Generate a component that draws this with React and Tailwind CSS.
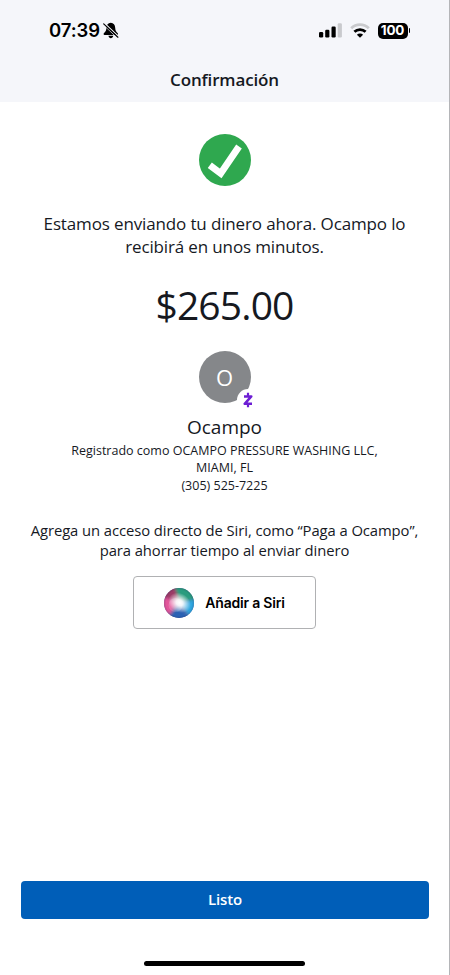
function StatusBar() {
  return (
    <div className="flex h-[61px] items-center justify-between pl-[49px] pr-[39px]">
      <div className="flex items-center gap-[3px] font-['Inter',sans-serif] text-[18.5px] font-semibold leading-none tracking-[-0.1px] text-black">
        <span className="whitespace-nowrap">07:39</span>
        <svg viewBox="0 0 16 17" className="h-[17px] w-[16px]">
          <path
            d="M7.8.8C5 1 3.500 3 3.400 5.800c-.1 2.800-.8 3.900-2.500 5.400-.7.700-.3 1.700.6 1.700h12.600c.9 0 1.300-1 .6-1.700-1.700-1.500-2.400-2.600-2.500-5.400C12.100 3 10.600 1 7.800.8Z"
            fill="#000"
          />
          <path d="M5.400 13.700h4.900c-.3 1.600-1.300 2.500-2.450 2.500s-2.150-.9-2.450-2.500Z" fill="#000" />
          <path d="M1.500 1.300 15.400 14.400" stroke="#f5f6fa" strokeWidth="1.300" />
          <path d="M.2 2.700 14.100 15.800" stroke="#f5f6fa" strokeWidth="0.800" />
          <path d="M.7 1.900 14.900 15.200" stroke="#000" strokeWidth="1.200" strokeLinecap="round" />
        </svg>
      </div>

      <div className="flex items-center gap-[8px]">
        <svg viewBox="0 0 23 15" className="h-[15px] w-[23px]">
          <rect x="0" y="9" width="4.2" height="5.5" rx="1.2" fill="#000" />
          <rect x="6.2" y="6.7" width="4.2" height="7.8" rx="1.2" fill="#000" />
          <rect x="12.5" y="3.5" width="4.2" height="11" rx="1.2" fill="#000" />
          <rect x="18.7" y="0.2" width="4.2" height="14.3" rx="1.2" fill="#c9cacd" />
        </svg>
        <svg viewBox="0 0 20 15" className="h-[15px] w-[20px]" fill="none">
          <path d="M1.200 5.200a12.700 12.700 0 0 1 17.600 0" stroke="#c9cacd" strokeWidth="2.800" />
          <path d="M4.400 8.800a8.100 8.100 0 0 1 11.200 0" stroke="#000" strokeWidth="2.800" />
          <path d="m10 14.800-3.100-3a4.400 4.400 0 0 1 6.200 0Z" fill="#000" />
        </svg>
        <div className="flex items-center gap-[1px]">
          <div className="flex h-[16px] w-[30px] items-center justify-center rounded-[5px] bg-black font-['Inter',sans-serif] text-[13.5px] font-bold leading-none tracking-[-0.2px] text-white">
            100
          </div>
          <div className="h-[5px] w-[1.5px] rounded-r-full bg-black" />
        </div>
      </div>
    </div>
  );
}

function CheckIcon() {
  return (
    <svg viewBox="0 0 52 52" className="h-[52px] w-[52px]">
      <circle cx="26" cy="26" r="26" fill="#2fa84f" />
      <path
        d="M10.800 31.300 21.700 39.500 40 12.500"
        fill="none"
        stroke="#fff"
        strokeWidth="6.800"
        strokeLinejoin="miter"
      />
    </svg>
  );
}

function Avatar() {
  return (
    <div className="relative flex h-[52px] w-[52px] items-center justify-center rounded-full bg-[#85878a] text-[22px] leading-none text-white">
      O
      <span className="absolute left-[38px] top-[38px] flex h-[22px] w-[22px] items-center justify-center rounded-full bg-white">
        <svg viewBox="0 0 10 16" className="h-[16px] w-[10px]" fill="none" stroke="#6d1ed4">
          <path d="M1 4.400h7.300L1.700 11.800H9" strokeWidth="2.500" strokeLinejoin="round" />
          <path d="M5 .8V4M5 12v3.200" strokeWidth="2.200" />
        </svg>
      </span>
    </div>
  );
}

function SiriOrb() {
  return (
    <svg viewBox="0 0 30 30" className="h-[30px] w-[30px]">
      <defs>
        <clipPath id="orb">
          <circle cx="15" cy="15" r="15" />
        </clipPath>
        <filter id="soft" x="-50%" y="-50%" width="200%" height="200%">
          <feGaussianBlur stdDeviation="1.8" />
        </filter>
        <radialGradient id="glow">
          <stop offset="0" stopColor="#fff" />
          <stop offset="0.3" stopColor="#fff" stopOpacity="0.9" />
          <stop offset="1" stopColor="#fff" stopOpacity="0" />
        </radialGradient>
        <radialGradient id="rim">
          <stop offset="0.85" stopColor="#1c2450" stopOpacity="0" />
          <stop offset="1" stopColor="#1c2450" stopOpacity="0.2" />
        </radialGradient>
      </defs>
      <g clipPath="url(#orb)">
        <rect width="30" height="30" fill="#6a6fa6" />
        <g filter="url(#soft)">
          <path d="M-3-3h16l2 17L-3 9Z" fill="#9c3b66" />
          <path d="M10-3h23v14l-17 3Z" fill="#2a9c7e" />
          <path d="M-3 8l17 6-8 12-9 4Z" fill="#e2559a" />
          <path d="M33 11 16 15l10 14 7-3Z" fill="#2fa6e0" />
          <path d="M15 17 2 33h26Z" fill="#2a62b4" />
        </g>
        <circle cx="11.5" cy="17" r="7" fill="#fff" opacity="0.18" />
        <ellipse cx="15.5" cy="15" rx="12" ry="9.5" fill="url(#glow)" transform="rotate(30 16 15)" />
        <circle cx="15" cy="15" r="15" fill="url(#rim)" />
      </g>
    </svg>
  );
}

function App() {
  return (
    <div className="flex h-[975px] w-[450px] flex-col border-r border-[#b4b5b8] bg-white font-['Open_Sans',sans-serif] text-[#16191f]">
      <header className="h-[102px] bg-[#f5f6fa]">
        <StatusBar />
        <h1 className="text-center text-[17px] font-semibold leading-[38px] tracking-[-0.15px]">
          Confirmación
        </h1>
      </header>

      <main className="flex flex-1 flex-col items-center pt-[32px] text-center">
        <CheckIcon />

        <p className="mt-[26px] whitespace-nowrap text-[17px] leading-[23px] tracking-[-0.14px]">
          Estamos enviando tu dinero ahora. Ocampo lo
          <br />
          recibirá en unos minutos.
        </p>

        <p className="mt-[22px] text-[39px] leading-[50px] tracking-[-0.85px]">$265.00</p>

        <div className="mt-[21px]">
          <Avatar />
        </div>

        <h2 className="mt-[10px] text-[19px] leading-[28px]">Ocampo</h2>
        <p className="mt-[0.6px] whitespace-nowrap text-[12.5px] leading-[17.6px]">
          Registrado como OCAMPO PRESSURE WASHING LLC,
          <br />
          MIAMI, FL
          <br />
          (305) 525-7225
        </p>

        <p className="mt-[25.4px] whitespace-nowrap text-[14.8px] leading-[20px] tracking-[-0.07px]">
          Agrega un acceso directo de Siri, como “Paga a Ocampo”,
          <br />
          para ahorrar tiempo al enviar dinero
        </p>

        <button className="mt-[16.4px] flex h-[53px] w-[183px] items-center justify-center gap-[11px] rounded-[4px] border border-[#b0b1b3] bg-white">
          <SiriOrb />
          <span className="whitespace-nowrap font-['Inter',sans-serif] text-[14px] font-semibold tracking-[-0.2px] text-black">
            Añadir a Siri
          </span>
        </button>
      </main>

      <footer className="flex flex-col items-center pb-[9px] pl-[21px] pr-[20px]">
        <button className="h-[38px] w-full rounded-[4px] bg-[#005eb8] pb-[2px] text-[15px] font-semibold tracking-[-0.15px] text-white">
          Listo
        </button>
        <div className="mr-px mt-[42px] h-[5px] w-[161px] rounded-full bg-black" />
      </footer>
    </div>
  );
}

export default App;
